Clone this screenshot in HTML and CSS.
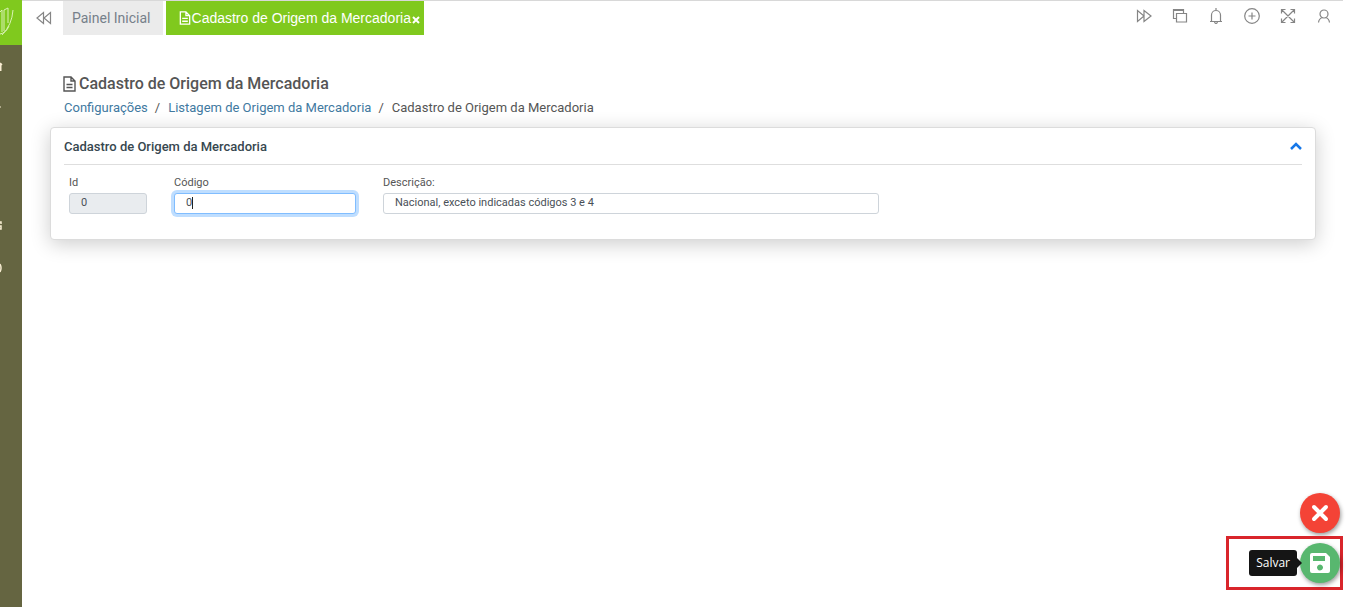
FILE: index.html
```html
<!DOCTYPE html>
<html lang="pt-BR">
<head>
<meta charset="utf-8">
<title>Cadastro de Origem da Mercadoria</title>
<link rel="stylesheet" href="styles.css">
</head>
<body>
<div class="app">
  <aside class="sidebar">
    <div class="brand">
      <svg width="22" height="44" viewBox="0 0 22 44" fill="none" stroke="#d9f2b4" stroke-width="1"><path d="M0 12l2-2v22M4 31V10l4-2v15M13 10q-1 15-11 25M9 26q-3 7-9 8" /></svg>
    </div>
    <svg class="side-icons" width="22" height="240" viewBox="0 0 22 240" fill="none" stroke="#f8edd2" stroke-width="1.500"><path d="M0 18l2 2M0.750 18v8" /><path d="M0 62h1" stroke-width="1"/><path d="M0 177h1v2M0 181h1v3H0M0 219q2 4 0 8" /></svg>
  </aside>
  <main class="main">
    <header class="topbar">
      <button class="icon-btn back" type="button" aria-label="Abas anteriores"><svg width="16" height="14" viewBox="0 0 16 14"><path d="M7.500 1.500v11l-6.500-5.500zM14.500 1.500v11L8 7z"/></svg></button>
      <nav class="tabs">
        <a class="tab" href="#inicio">Painel Inicial</a>
        <a class="tab active" href="#cadastro"><svg class="doc" width="12" height="14" viewBox="0 0 12 15"><path d="M1 1h6l4 4v9H1zM7 1v4h4M3 8h6M3 11h6"/></svg><span>Cadastro de Origem da Mercadoria</span><svg class="tab-close" width="8" height="8" viewBox="0 0 8 8"><path d="M1 1l6 6M7 1L1 7"/></svg></a>
      </nav>
      <div class="tools">
        <button class="icon-btn" type="button" aria-label="Próximas abas"><svg width="16" height="16" viewBox="0 0 16 16"><path d="M1.500 2.500v11L8 8zM8 2.500v11L15 8z"/></svg></button>
        <button class="icon-btn" type="button" aria-label="Janelas"><svg width="16" height="16" viewBox="0 0 16 16"><path d="M4.500 5.500h10v8.500h-10zM4 10.500H1.500v-9h10V5M2 2.500h9"/></svg></button>
        <button class="icon-btn" type="button" aria-label="Notificações"><svg width="16" height="16" viewBox="0 0 16 16"><path d="M2 13.500h12M3.500 13V7a4.500 4.500 0 0 1 9 0v6M8 2.500V0M6.500 14q1.500 3 3 0"/></svg></button>
        <button class="icon-btn" type="button" aria-label="Adicionar"><svg width="16" height="16" viewBox="0 0 16 16"><circle cx="8" cy="8" r="7.300"/><path d="M8 4.500v7M4.500 8h7"/></svg></button>
        <button class="icon-btn" type="button" aria-label="Tela cheia"><svg width="16" height="16" viewBox="0 0 16 16"><path d="M1.500 1.500l13 13M14.500 1.500l-13 13M1.500 5.500v-4h4M10.500 1.500h4v4M14.500 10.500v4h-4M5.500 14.500h-4v-4"/></svg></button>
        <button class="icon-btn" type="button" aria-label="Usuário"><svg width="16" height="16" viewBox="0 0 16 16"><circle cx="8" cy="6" r="4"/><path d="M2.500 14.500q.500-4 4-5M13.500 14.500q-.500-4-4-5"/></svg></button>
      </div>
    </header>
    <div class="content">
      <h1 class="page-title"><svg class="doc" width="13" height="16" viewBox="0 0 13 16"><path d="M1 1h7l4 4v10H1zM8 1v4h4M3.500 8.500h6M3.500 11.500h6"/></svg><span>Cadastro de Origem da Mercadoria</span></h1>
      <nav class="crumbs">
        <a href="#config">Configurações</a><span class="sep">/</span><a href="#lista">Listagem de Origem da Mercadoria</a><span class="sep">/</span><span>Cadastro de Origem da Mercadoria</span>
      </nav>
      <section class="card">
        <div class="card-head">
          <h2>Cadastro de Origem da Mercadoria</h2>
          <button class="icon-btn collapse" type="button" aria-label="Recolher"><svg width="12" height="8" viewBox="0 0 12 8"><path d="M1 7l5-5 5 5"/></svg></button>
        </div>
        <form class="fields">
          <div class="field id"><label for="id">Id</label><input id="id" type="text" value="0" readonly></div>
          <div class="field code"><label for="codigo">Código</label><div class="input-wrap"><input id="codigo" class="focused" type="text" value="0"><span class="caret"></span></div></div>
          <div class="field desc"><label for="descricao">Descrição:</label><input id="descricao" type="text" value="Nacional, exceto indicadas códigos 3 e 4"></div>
        </form>
      </section>
    </div>
  </main>
</div>
<div class="actions">
  <button class="fab cancel" type="button" aria-label="Cancelar"><svg width="18" height="18" viewBox="0 0 18 18"><path d="M3 3l12 12M15 3L3 15"/></svg></button>
  <div class="highlight">
    <span class="tip" id="tip">Salvar</span>
    <button class="fab save" type="button" aria-label="Salvar" aria-describedby="tip"><svg width="22" height="22" viewBox="0 0 22 22"><path fill="#fff" fill-rule="evenodd" d="M3 1h14l4 4v14q0 2-2 2H3q-2 0-2-2V3q0-2 2-2zM4 4v5h12V4zM11 12.500a3 3 0 1 0 .010 0z"/></svg></button>
  </div>
</div>
</body>
</html>
```

FILE: styles.css
```css
* { box-sizing: border-box; }
body {
  margin: 0;
  background: #fff;
  color: #555;
  font-family: Roboto, "Liberation Sans", sans-serif;
  font-size: 13px;
}
a { color: #41799f; text-decoration: none; }
.app { display: flex; min-height: 100vh; }
.sidebar { width: 22px; flex: none; background: #656541; }
.brand { height: 45px; background: #80c91e; }
.brand svg, .side-icons { display: block; }
.main { flex: 1; min-width: 0; }
.icon-btn {
  display: flex;
  padding: 0;
  border: 0;
  background: none;
}
.icon-btn svg { fill: none; stroke: #858585; stroke-width: 1.200; }
.topbar {
  display: flex;
  align-items: flex-start;
  margin-right: 7px;
  padding: 0 11px 0 14px;
  border-top: 1px solid #d8d8d8;
}
.back { margin: 10px 11px 0 0; }
.tabs { display: flex; gap: 3px; }
.tab {
  display: flex;
  align-items: center;
  height: 34px;
  padding: 0 12px 0 9px;
  background: #ebebeb;
  color: #76808a;
  font-size: 14px;
}
.tab.active {
  gap: 1px;
  padding: 0 4px 0 13px;
  background: #80c91e;
  color: #fff;
  font-family: "Liberation Sans", Arial, sans-serif;
}
.doc { flex: none; fill: none; stroke: currentColor; stroke-width: 1.400; }
.tab-close { margin-top: 3px; fill: none; stroke: #fff; stroke-width: 2; }
.tools { display: flex; gap: 20px; margin: 7px 0 0 auto; }
.content { padding: 38px 34px 0 28px; }
.page-title {
  display: flex;
  align-items: center;
  gap: 3px;
  margin: 0 0 4px 13px;
  font-size: 16px;
  line-height: 22px;
  font-weight: 500;
}
.crumbs { display: flex; margin-left: 14px; line-height: 18px; }
.sep { margin: 0 8px 0 7px; }
.card {
  margin-top: 10px;
  padding: 0 13px 25px;
  border: 1px solid #dcdcdc;
  border-radius: 4px;
  background: #fff;
  box-shadow: 0 4px 20px rgba(0, 0, 0, .2);
}
.card-head {
  display: flex;
  align-items: center;
  justify-content: space-between;
  height: 37px;
  border-bottom: 1px solid #dedede;
}
.card-head h2 { margin: 0; color: #37474f; font-size: 13px; font-weight: 500; }
.icon-btn.collapse svg { stroke: #1677e8; stroke-width: 2.500; }
.fields { display: flex; padding: 10px 5px 0; }
.field { font-size: 11px; min-width: 0; }
.field label { display: block; margin-bottom: 3px; line-height: 15px; }
.field input {
  display: block;
  width: 100%;
  height: 21px;
  padding: 0 11px 2px;
  border: 1px solid #ced4da;
  border-radius: 3px;
  background: #fff;
  color: #495057;
  font: inherit;
  outline: 0;
}
.field input[readonly] { background: #e9ecef; }
.field input.focused {
  border-color: #80bdff;
  box-shadow: 0 0 0 3px #bfdeff;
  caret-color: transparent;
}
.id { width: 78px; margin-right: 27px; }
.code { width: 182px; margin-right: 27px; }
.desc { width: 496px; }
.input-wrap { position: relative; }
.caret {
  position: absolute;
  left: 18px;
  top: 4px;
  width: 1px;
  height: 12px;
  background: #222;
}
.actions {
  position: fixed;
  right: 7px;
  bottom: 17px;
  display: flex;
  flex-direction: column;
  align-items: flex-end;
  gap: 3px;
}
.fab {
  display: flex;
  align-items: center;
  justify-content: center;
  width: 40px;
  height: 40px;
  padding: 0;
  border: 0;
  border-radius: 50%;
  box-shadow: 1px 2px 4px rgba(0, 0, 0, .4);
}
.cancel { margin-right: 3px; background: #f44336; }
.cancel svg { stroke: #fff; stroke-width: 4; stroke-linecap: round; }
.save { background: #58b76f; }
.highlight {
  display: flex;
  align-items: center;
  justify-content: flex-end;
  gap: 3px;
  width: 117px;
  height: 54px;
  border: 3px solid #d9252b;
}
.tip {
  position: relative;
  padding: 4px 7px;
  border-radius: 3px;
  background: #151515;
  color: #fff;
  font-family: "Open Sans", sans-serif;
  font-size: 12px;
  line-height: 18px;
}
.tip::after {
  content: "";
  position: absolute;
  left: 100%;
  top: 8px;
  z-index: 1;
  border: 5px solid transparent;
  border-left-color: #151515;
  border-right: 0;
}
```
